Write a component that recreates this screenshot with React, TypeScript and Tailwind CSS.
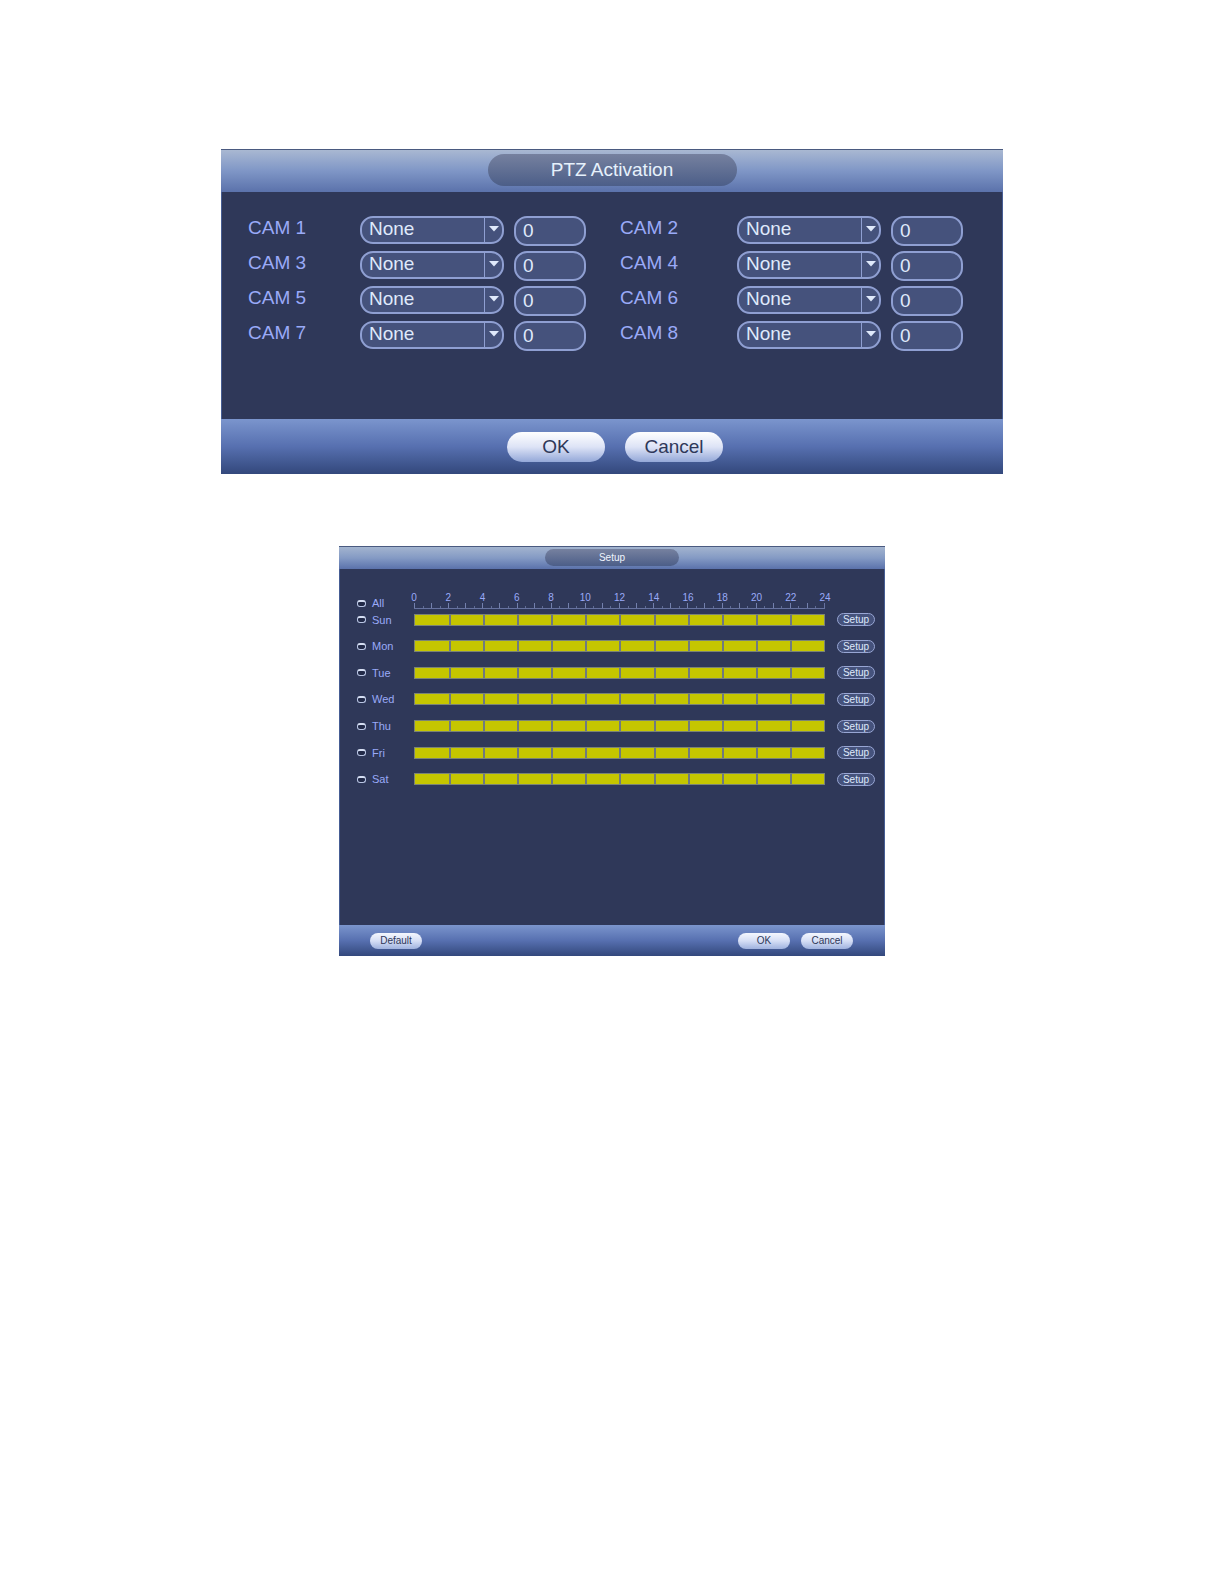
import React from "react";

const cams = [1, 2, 3, 4, 5, 6, 7, 8];
const days = ["Sun", "Mon", "Tue", "Wed", "Thu", "Fri", "Sat"];
const hours = [0, 2, 4, 6, 8, 10, 12, 14, 16, 18, 20, 22, 24];

function CamFields({ n }: { n: number }) {
  return (
    <>
      <label htmlFor={`cam-${n}`} className="leading-6 text-[#9aaaf8]">
        CAM {n}
      </label>
      <div className="relative h-7">
        <select
          id={`cam-${n}`}
          className="block h-7 w-full appearance-none rounded-[13px] border-2 border-[#8f9fd2] bg-[#45527c] pb-0.5 pl-[7px] leading-5 text-[#dfe9fb]"
        >
          <option>None</option>
        </select>
        <span className="pointer-events-none absolute inset-y-0.5 right-0.5 flex w-[18px] justify-center border-l border-[#8f9fd2] pt-2">
          <svg width="10" height="6" viewBox="0 0 10 6" aria-hidden="true">
            <path d="M0 0h10L5 5.5z" fill="#dfe9fb" />
          </svg>
        </span>
      </div>
      <input
        type="text"
        aria-label={`CAM ${n} address`}
        defaultValue="0"
        className="ml-2.5 h-[30px] w-[72px] rounded-[13px] border-2 border-[#8f9fd2] bg-[#45527c] pl-[7px] text-[#dfe9fb]"
      />
    </>
  );
}

function PtzDialog() {
  return (
    <section className="mx-auto w-full max-w-[782px] border-t border-[#4a5a80] bg-[#2f3859] text-[19px]">
      <header className="flex justify-center bg-linear-to-b from-[#a9b8d2] via-[#7f96c6] to-[#5b72ab] pt-1 pb-1.5">
        <h1 className="flex h-8 w-[249px] items-center justify-center rounded-full bg-linear-to-b from-[#76819f] to-[#4c5e88] text-[#e6f1fc]">
          PTZ Activation
        </h1>
      </header>
      <div className="border-x border-[#465d94] pt-6 pr-[39px] pb-[63px] pl-[26px]">
        <div className="grid auto-rows-[35px] grid-cols-[112fr_144px_auto_34px_117fr_144px_auto] items-start">
          {cams.map((n) => (
            <React.Fragment key={n}>
              <CamFields n={n} />
              {n % 2 === 1 && <span />}
            </React.Fragment>
          ))}
        </div>
      </div>
      <footer className="flex h-[55px] items-center justify-center gap-5 bg-linear-to-b from-[#7b95cd] via-[#5770b0] to-[#33487c] pl-1.5">
        {["OK", "Cancel"].map((t) => (
          <button
            key={t}
            type="button"
            className="h-[30px] w-[98px] rounded-full bg-linear-to-b from-white via-[#dde3f6] to-[#94a8d8] pt-px text-[#2f3859]"
          >
            {t}
          </button>
        ))}
      </footer>
    </section>
  );
}

function DayCheck({ label }: { label: string }) {
  return (
    <label className="flex items-center gap-1.5 text-[11px] leading-3 text-[#9aaaf8]">
      <input
        type="checkbox"
        className="h-[7px] w-[9px] appearance-none rounded-[3px] border border-t-2 border-[#b9c5e4] border-t-[#d5def2] bg-[#222a48]"
      />
      {label}
    </label>
  );
}

function Ruler() {
  return (
    <div className="mr-3 text-[10px] leading-[11px] text-[#9aaaf8]">
      <div className="flex justify-between">
        {hours.map((h) => (
          <span key={h} className="flex w-0 justify-center">
            {h}
          </span>
        ))}
      </div>
      <div className="grid h-1.5 grid-cols-[repeat(24,1fr)] border-r border-b border-[#66729f]">
        {Array.from({ length: 24 }, (_, i) => (
          <span key={i} className="flex items-end justify-center border-l border-[#7380ad]">
            <span className="h-0.5 w-px bg-[#5f6b94]" />
          </span>
        ))}
      </div>
    </div>
  );
}

function DayBar() {
  return (
    <div className="mr-3 grid h-3 grid-cols-12 border border-[#7b8475] bg-[#c5c600]">
      {Array.from({ length: 12 }, (_, i) => (
        <span key={i} className={i ? "border-l-2 border-[#6f7a80]" : ""} />
      ))}
    </div>
  );
}

function SmallButton({ children }: { children: string }) {
  return (
    <button
      type="button"
      className="h-4 w-[52px] rounded-full bg-linear-to-b from-[#f4f7fe] via-[#d5def5] to-[#9fb2de] text-[#2f3859]"
    >
      {children}
    </button>
  );
}

function ScheduleDialog() {
  return (
    <section className="mx-auto w-full max-w-[546px] border-t border-[#4a5a80] bg-[#2f3859] text-[10px] leading-3">
      <header className="flex justify-center bg-linear-to-b from-[#a3b4cf] via-[#849ac4] to-[#5b72ab] pt-0.5 pb-[3px]">
        <h2 className="flex h-[17px] w-[134px] items-center justify-center rounded-full bg-linear-to-b from-[#76819f] to-[#4c5e88] text-[#f0f5fd]">
          Setup
        </h2>
      </header>
      <div className="h-[356px] border-x border-[#465d94] pt-[23px] pr-[9px] pl-[17px]">
        <div className="grid grid-cols-[57px_1fr_38px] items-end">
          <DayCheck label="All" />
          <Ruler />
        </div>
        <div className="mt-1 flex h-[173px] flex-col justify-between">
          {days.map((d) => (
            <div key={d} className="grid grid-cols-[57px_1fr_38px] items-center">
              <DayCheck label={d} />
              <DayBar />
              <button
                type="button"
                className="h-[13px] rounded-full border border-[#98a6d4] bg-[#45527c] leading-[11px] text-[#dfe9fb]"
              >
                Setup
              </button>
            </div>
          ))}
        </div>
      </div>
      <footer className="flex h-[31px] items-center gap-[11px] bg-linear-to-b from-[#7b95cd] via-[#5770b0] to-[#33487c] pr-8 pl-[31px]">
        <SmallButton>Default</SmallButton>
        <span className="grow" />
        <SmallButton>OK</SmallButton>
        <SmallButton>Cancel</SmallButton>
      </footer>
    </section>
  );
}

export default function App() {
  return (
    <main className="flex min-h-screen flex-col gap-[72px] bg-white pt-[149px] font-['Liberation_Sans',sans-serif]">
      <PtzDialog />
      <ScheduleDialog />
    </main>
  );
}
